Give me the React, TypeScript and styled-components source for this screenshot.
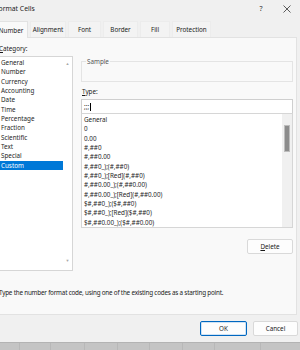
import React from "react";
import styled, { createGlobalStyle } from "styled-components";

const Global = createGlobalStyle`
  html, body { margin: 0; padding: 0; background: #f0f0f0; overflow: hidden; }
  body { font-family: "Noto Sans", "Open Sans", sans-serif; color: #1a1a1a; }
`;

const Root = styled.div`
  width: 308px;
  height: 350px;
  margin-left: -8px;
  display: flex;
  flex-direction: column;
  background: #f0f0f0;
  font-size: 6.3px;
  overflow: hidden;
`;

const TitleBar = styled.div`
  height: 21px;
  display: flex;
  align-items: center;
  padding-left: 3px;
  font-size: 6.8px;
`;

const Title = styled.span`
  flex: 1;
  margin-top: -4px;
`;

const TitleButton = styled.span`
  width: 26px;
  display: flex;
  justify-content: center;
  margin-top: -4px;
  color: #333;
  font-size: 7px;
`;

const Tabs = styled.div`
  display: flex;
  gap: 2px;
  padding-left: 2px;
  height: 16px;
  align-items: flex-end;
`;

const Tab = styled.div<{ $active?: boolean; $w: number }>`
  width: ${(p) => p.$w}px;
  height: ${(p) => (p.$active ? 17 : 16)}px;
  display: flex;
  align-items: center;
  justify-content: center;
  background: ${(p) => (p.$active ? "#f9f9f9" : "#f3f3f3")};
  border: 1px solid ${(p) => (p.$active ? "#e2e2e2" : "#ececec")};
  border-bottom: none;
  box-sizing: border-box;
  position: relative;
  z-index: ${(p) => (p.$active ? 1 : 0)};
  margin-bottom: ${(p) => (p.$active ? -1 : 0)}px;
  color: #222;
`;

const Panel = styled.div`
  width: 303px;
  height: 278px;
  box-sizing: border-box;
  margin-left: 2px;
  background: #f9f9f9;
  border: 1px solid #e2e2e2;
  padding: 5px 3px 0 3px;
  display: flex;
  flex-direction: column;
`;

const Columns = styled.div`
  display: flex;
  gap: 8px;
`;

const LeftCol = styled.div`
  width: 75px;
  display: flex;
  flex-direction: column;
`;

const RightCol = styled.div`
  flex: 1;
  display: flex;
  flex-direction: column;
  padding-top: 14px;
`;

const Label = styled.div`
  height: 13px;
  line-height: 12px;
  padding-left: 1px;
  u { text-decoration: underline; }
`;

const ListBox = styled.div<{ $h: number }>`
  height: ${(p) => p.$h}px;
  box-sizing: border-box;
  background: #fff;
  border: 1px solid #d6d6d6;
  display: flex;
  overflow: hidden;
`;

const Items = styled.div`
  flex: 1;
  padding-top: 1px;
  display: flex;
  flex-direction: column;
`;

const Item = styled.div<{ $sel?: boolean }>`
  height: 9.35px;
  line-height: 9.35px;
  padding-left: 2px;
  white-space: nowrap;
  background: ${(p) => (p.$sel ? "#0078d7" : "transparent")};
  color: ${(p) => (p.$sel ? "#fff" : "#262626")};
`;

const ArrowBar = styled.div`
  width: 9px;
  display: flex;
  flex-direction: column;
  justify-content: space-between;
  align-items: center;
  padding: 4px 0 7px;
  color: #a8a8a8;
  font-size: 4px;
`;

const ScrollTrack = styled.div`
  width: 10px;
  background: #f0f0f0;
  display: flex;
  justify-content: center;
  padding-top: 11px;
`;

const Thumb = styled.div`
  width: 6px;
  height: 27px;
  background: #8c8c8c;
  border: 1px solid #bdbdbd;
  box-sizing: border-box;
`;

const SampleBox = styled.fieldset`
  margin: 0;
  height: 25px;
  box-sizing: border-box;
  border: 1px solid #e4e4e4;
  padding: 0 4px;
  legend {
    padding: 0 1px;
    margin-left: 0;
    color: #555;
    font-size: 6.3px;
  }
`;

const TypeLabel = styled(Label)`
  margin-top: 3px;
  height: 14px;
  line-height: 14px;
`;

const Input = styled.div`
  height: 15px;
  box-sizing: border-box;
  background: #fff;
  border: 1px solid #cfcfcf;
  border-bottom-color: #c0c0c0;
  padding-left: 2px;
  display: flex;
  align-items: center;
  margin-bottom: -1px;
`;

const Caret = styled.span`
  display: inline-block;
  width: 1px;
  height: 8px;
  background: #000;
  margin-left: 1px;
`;

const ButtonRow = styled.div`
  display: flex;
  justify-content: flex-end;
  margin-top: 11px;
`;

const Button = styled.div<{ $primary?: boolean; $w?: number }>`
  width: ${(p) => (p.$w ? p.$w : 46)}px;
  height: 15px;
  box-sizing: border-box;
  display: flex;
  align-items: center;
  justify-content: center;
  background: #fdfdfd;
  border: 1px solid ${(p) => (p.$primary ? "#0067c0" : "#d9d9d9")};
  box-shadow: ${(p) => (p.$primary ? "inset 0 0 0 1px #cfe3f5" : "none")};
  border-radius: 2px;
  color: #1a1a1a;
  u { text-decoration: underline; }
`;

const Hint = styled.div`
  margin-top: 17px;
  margin-left: 1px;
  white-space: nowrap;
  letter-spacing: -0.2px;
  color: #222;
`;

const Footer = styled.div`
  height: 27px;
  display: flex;
  justify-content: flex-end;
  align-items: center;
  gap: 6px;
  padding-right: 2px;
`;

const Sheet = styled.div`
  flex: 1;
  background: #c4c4c4;
  border-top: 1px solid #b3b3b3;
  display: flex;
`;

const Cell = styled.div<{ $w: number }>`
  width: ${(p) => p.$w}px;
  border-right: 1px solid #b8b8b8;
  flex-shrink: 0;
`;

const categories = [
  "General", "Number", "Currency", "Accounting", "Date", "Time",
  "Percentage", "Fraction", "Scientific", "Text", "Special", "Custom",
];

const formats = [
  "General", "0", "0.00", "#,##0", "#,##0.00",
  "#,##0_);(#,##0)", "#,##0_);[Red](#,##0)", "#,##0.00_);(#,##0.00)",
  "#,##0.00_);[Red](#,##0.00)", "$#,##0_);($#,##0)",
  "$#,##0_);[Red]($#,##0)", "$#,##0.00_);($#,##0.00)",
];

const tabs: [string, number][] = [
  ["Number", 34], ["Alignment", 36], ["Font", 33], ["Border", 35], ["Fill", 30], ["Protection", 39],
];

export default function App() {
  return (
    <>
      <Global />
      <Root>
        <TitleBar>
          <Title>Format Cells</Title>
          <TitleButton>?</TitleButton>
          <TitleButton>
            <svg width="8" height="8" viewBox="0 0 8 8">
              <path d="M0.5 0.5L7.5 7.5M7.5 0.5L0.5 7.5" stroke="#333" strokeWidth="0.8" />
            </svg>
          </TitleButton>
        </TitleBar>
        <Tabs>
          {tabs.map(([t, w], i) => (
            <Tab key={t} $active={i === 0} $w={w}>{t}</Tab>
          ))}
        </Tabs>
        <Panel>
          <Columns>
            <LeftCol>
              <Label><u>C</u>ategory:</Label>
              <ListBox $h={215}>
                <Items>
                  {categories.map((c) => (
                    <Item key={c} $sel={c === "Custom"}>{c}</Item>
                  ))}
                </Items>
                <ArrowBar>
                  <span>▲</span>
                  <span>▼</span>
                </ArrowBar>
              </ListBox>
            </LeftCol>
            <RightCol>
              <SampleBox>
                <legend>Sample</legend>
              </SampleBox>
              <TypeLabel><u>T</u>ype:</TypeLabel>
              <Input>;;;<Caret /></Input>
              <ListBox $h={115}>
                <Items>
                  {formats.map((f) => (
                    <Item key={f}>{f}</Item>
                  ))}
                </Items>
                <ScrollTrack>
                  <Thumb />
                </ScrollTrack>
              </ListBox>
              <ButtonRow>
                <Button><u>D</u>elete</Button>
              </ButtonRow>
            </RightCol>
          </Columns>
          <Hint>Type the number format code, using one of the existing codes as a starting point.</Hint>
        </Panel>
        <Footer>
          <Button $primary $w={47}>OK</Button>
          <Button $w={45}>Cancel</Button>
        </Footer>
        <Sheet>
          {[27, 30, 33, 32, 31, 32, 31, 45, 47, 30].map((w, i) => (
            <Cell key={i} $w={w} />
          ))}
        </Sheet>
      </Root>
    </>
  );
}
